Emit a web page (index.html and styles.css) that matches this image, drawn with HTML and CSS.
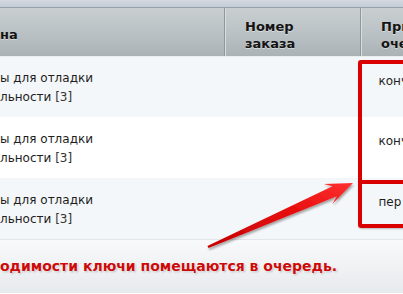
FILE: index.html
```html
<!DOCTYPE html>
<html lang="ru">
<head>
    <meta charset="UTF-8">
    <title>Ключи</title>
    <link rel="stylesheet" href="styles.css">
</head>
<body>

<div class="page">
    <div class="top-strip"></div>

    <!-- Таблица ключей -->
    <table class="keys">
        <thead>
            <tr>
                <th class="col-name">на</th>
                <th class="col-order">Номер<br>заказа</th>
                <th class="col-queue">При<br>оче</th>
            </tr>
        </thead>
        <tbody>
            <tr class="odd">
                <td>ы для отладки<br>льности <span class="count">[3]</span></td>
                <td></td>
                <td class="state state-red">конч</td>
            </tr>
            <tr>
                <td>ы для отладки<br>льности <span class="count">[3]</span></td>
                <td></td>
                <td class="state state-red">конч</td>
            </tr>
            <tr class="odd">
                <td>ы для отладки<br>льности <span class="count">[3]</span></td>
                <td></td>
                <td class="state">пер</td>
            </tr>
        </tbody>
    </table>

    <div class="note">одимости ключи помещаются в очередь.</div>

    <!-- Выделение колонки очереди -->
    <div class="mark">
        <div class="mark-split"></div>
    </div>

    <!-- Стрелка -->
    <svg class="arrow" width="403" height="294" viewBox="0 0 403 294">
        <defs>
            <linearGradient id="arrowFill" x1="0" y1="1" x2="1" y2="0">
                <stop offset="0" stop-color="#c40000"/>
                <stop offset="0.6" stop-color="#e81010"/>
                <stop offset="1" stop-color="#ff3030"/>
            </linearGradient>
            <filter id="arrowShadow" x="-10%" y="-20%" width="130%" height="150%">
                <feDropShadow dx="1" dy="2" stdDeviation="1.2" flood-color="#000" flood-opacity="0.35"/>
            </filter>
        </defs>
        <polygon fill="url(#arrowFill)" filter="url(#arrowShadow)"
                 points="208.6,248 336.9,196.2 332.3,204 353,183 323.8,184 332.5,186.3 207.4,246"/>
    </svg>
</div>

</body>
</html>
```

FILE: styles.css
```css
body, html {
    margin: 0;
    height: 100%;
    overflow: hidden;
    background-color: #fff;
    font-family: "DejaVu Sans", Verdana, sans-serif;
}

.page {
    position: relative;
    width: 403px;
    height: 294px;
    overflow: hidden;
}

.top-strip {
    height: 7px;
    background: linear-gradient(#d3d9e1, #c3cbd5);
    border-bottom: 1px solid #97a1ad;
}

/* Таблица */
.keys {
    border-collapse: collapse;
    width: 470px;
    table-layout: fixed;
}

.keys thead tr {
    height: 48px;
}

.keys th {
    padding: 6px 0 0;
    text-align: left;
    vertical-align: middle;
    font-size: 13px;
    font-weight: bold;
    line-height: 17px;
    color: #141414;
    text-shadow: 0 1px 0 rgba(255, 255, 255, 0.45);
    background: linear-gradient(#c9cfd1, #b8bfc2 60%, #aab2b5);
    border-bottom: 1px solid #e9edf0;
}

.keys .col-name {
    width: 224px;
}

.keys .col-order {
    width: 115px;
    padding-left: 20px;
    border-left: 1px solid #8f989c;
    box-shadow: inset 1px 0 0 #d8dddf;
}

.keys .col-queue {
    padding-left: 20px;
    border-left: 1px solid #8f989c;
    box-shadow: inset 1px 0 0 #d8dddf;
}

.keys tbody tr {
    height: 61px;
}

.keys td {
    padding: 3px 0 0;
    font-size: 12px;
    line-height: 19px;
    color: #1e1e1e;
    vertical-align: middle;
    background-color: #fff;
}

.keys tr.odd td {
    background-color: #f4f7f9;
}

.keys tbody tr:last-child td {
    border-bottom: 1px solid #e2e6ea;
}

.count {
    color: #333;
}

.keys td.state {
    padding-left: 18px;
    padding-top: 15px;
    vertical-align: top;
}

.state-red {
    color: #e3262b;
}

/* Нижняя подпись */
.note {
    height: 53px;
    line-height: 52px;
    font-size: 14px;
    font-weight: bold;
    color: #cc0a0a;
    white-space: nowrap;
    text-shadow: 0 0 2px #fff, 0 0 2px #fff, 1px 1px 2px rgba(0, 0, 0, 0.3);
    background: linear-gradient(#f8f9fa, #e7eaed);
}

/* Красная рамка поверх колонки */
.mark {
    position: absolute;
    left: 358px;
    top: 60px;
    width: 80px;
    height: 160px;
    border: 4px solid #d90000;
    border-radius: 3px;
    box-shadow: 1px 1px 2px rgba(0, 0, 0, 0.25);
}

.mark-split {
    position: absolute;
    left: 0;
    right: 0;
    top: 116px;
    height: 4px;
    background-color: #d90000;
}

.arrow {
    position: absolute;
    left: 0;
    top: 0;
    pointer-events: none;
}
```
